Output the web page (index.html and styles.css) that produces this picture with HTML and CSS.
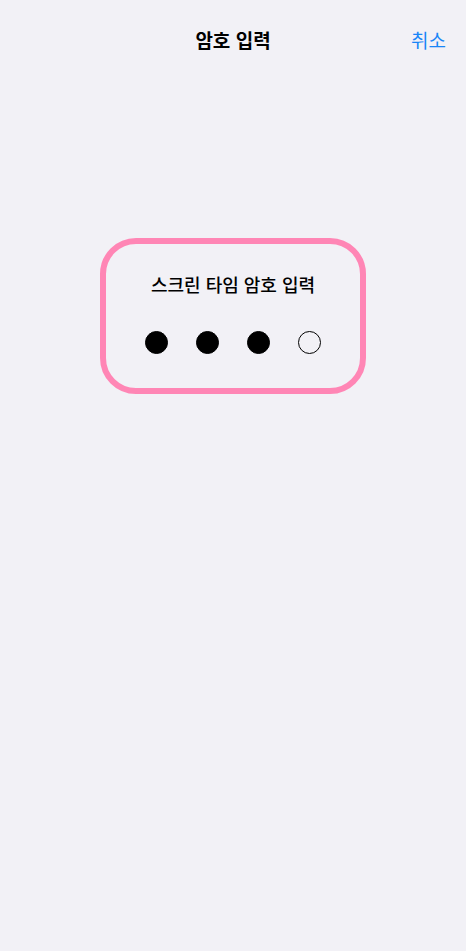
FILE: index.html
```html
<!DOCTYPE html>
<html lang="ko">
<head>
    <meta charset="UTF-8">
    <meta name="viewport" content="width=device-width, initial-scale=1.0">
    <title>암호 입력</title>
    <link rel="stylesheet" href="styles.css">
</head>
<body>
    <header class="nav-bar">
        <span></span>
        <h1 class="nav-title">암호 입력</h1>
        <button class="nav-cancel">취소</button>
    </header>

    <main class="passcode">
        <div class="passcode-box">
            <p class="passcode-label">스크린 타임 암호 입력</p>
            <div class="passcode-dots">
                <span class="dot filled"></span>
                <span class="dot filled"></span>
                <span class="dot filled"></span>
                <span class="dot"></span>
            </div>
        </div>
    </main>
</body>
</html>
```

FILE: styles.css
```css
body {
    margin: 0;
    min-height: 951px;
    background-color: #f2f1f6;
    font-family: "Noto Sans CJK KR", "Noto Sans", sans-serif;
    color: #000;
}
.nav-bar {
    display: grid;
    grid-template-columns: 1fr auto 1fr;
    align-items: center;
    height: 80px;
}
.nav-title {
    margin: 0;
    font-size: 19px;
    font-weight: 600;
    line-height: 24px;
}
.nav-cancel {
    justify-self: end;
    margin-right: 20px;
    padding: 0;
    border: none;
    background: none;
    font-family: inherit;
    font-size: 19px;
    line-height: 24px;
    color: #1a86f7;
    cursor: pointer;
}
.passcode {
    display: flex;
    justify-content: center;
    padding-top: 158px;
}
.passcode-box {
    box-sizing: border-box;
    width: 266px;
    height: 156px;
    padding-top: 28px;
    border: 6px solid #ff86b5;
    border-radius: 36px;
    text-align: center;
}
.passcode-label {
    margin: 0;
    font-size: 18px;
    font-weight: 500;
    line-height: 24px;
}
.passcode-dots {
    display: flex;
    justify-content: center;
    gap: 28px;
    margin-top: 35px;
}
.dot {
    box-sizing: border-box;
    width: 23px;
    height: 23px;
    border: 1.6px solid #000;
    border-radius: 50%;
}
.dot.filled {
    background-color: #000;
}
```
